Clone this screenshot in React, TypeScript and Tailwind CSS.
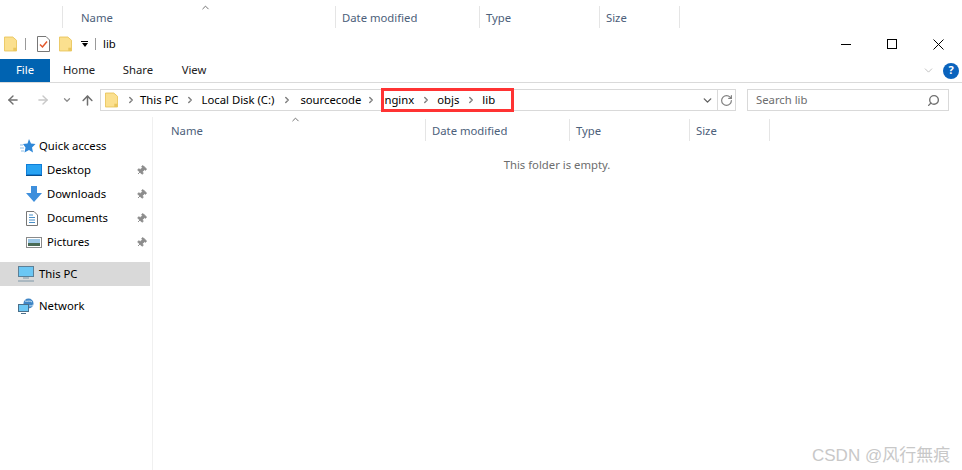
import React from 'react';
import { ArrowLeft, ArrowRight, ArrowUp, ChevronDown, ChevronRight, ChevronUp, Pin, RotateCw, Search } from 'lucide-react';

const FONT = "font-['Noto_Sans','Open_Sans',sans-serif]";

const FolderIcon: React.FC<{ className?: string }> = ({ className }) => (
  <svg viewBox="0 0 14 16" className={className}>
    <path d="M0.5 0.5H9.5L13.5 4V15.5H0.5Z" fill="#fbe08f" stroke="#e9c65e" />
    <path d="M10 12H13.5V15.5H10Z" fill="#e9c65e" />
  </svg>
);

const ChecklistIcon = () => (
  <svg viewBox="0 0 13 16" className="h-4 w-[13px]">
    <path d="M0.5 0.5H9L12.5 4V15.5H0.5Z" fill="#fff" stroke="#777" />
    <path d="M3 8.5L5.5 11L10 5.5" fill="none" stroke="#e2572b" strokeWidth="1.5" />
  </svg>
);

const DesktopIcon = () => (
  <svg viewBox="0 0 16 12" className="h-3 w-4">
    <rect width="16" height="12" fill="#0f7ed8" />
    <path d="M1 1H15V10H1Z" fill="#29a3f2" />
    <path d="M0 11H16V12H0Z" fill="#0b4f8c" />
  </svg>
);

const DownloadIcon = () => (
  <svg viewBox="0 0 16 16" className="h-4 w-4">
    <path d="M5 0H11V7H16L8 16L0 7H5Z" fill="#3e8fdc" />
  </svg>
);

const DocumentIcon = () => (
  <svg viewBox="0 0 12 15" className="h-[15px] w-3">
    <path d="M0.5 0.5H8L11.5 4V14.5H0.5Z" fill="#fff" stroke="#777" />
    <path d="M3 4H7M3 6.5H9M3 9H9M3 11.5H9" stroke="#4a90c8" />
  </svg>
);

const PicturesIcon = () => (
  <svg viewBox="0 0 16 11" className="h-[11px] w-4">
    <rect x="0.5" y="0.5" width="15" height="10" fill="#fff" stroke="#8a8a8a" />
    <rect x="2" y="2" width="12" height="4" fill="#9cc7e6" />
    <rect x="2" y="6" width="12" height="3" fill="#4a6b55" />
  </svg>
);

const PcIcon = () => (
  <svg viewBox="0 0 16 16" className="h-4 w-4">
    <rect x="0.5" y="0.5" width="15" height="10" fill="#6cc7f4" stroke="#5c7f96" />
    <path d="M5 12H11M0 15H16" stroke="#7d97a8" />
  </svg>
);

const NetworkIcon = () => (
  <svg viewBox="0 0 16 16" className="h-4 w-4">
    <circle cx="10.5" cy="5.5" r="5" fill="#3f86c6" />
    <path d="M7 3C9 4 12 2 14 4M8 8C10 7 13 9 15 7" stroke="#cfe6f5" fill="none" />
    <rect x="0.5" y="6.5" width="10" height="7" fill="#6cc7f4" stroke="#4a6f8a" />
    <path d="M3 15.5H8" stroke="#4a6f8a" />
  </svg>
);

const QuickAccessIcon = () => (
  <svg viewBox="0 0 16 14" className="h-[14px] w-4">
    <path d="M9 0L11 4.5L15.5 5L12 8.500L13 13.500L9 11L4.500 13.500L5.500 8.500L3 5L7.500 4.500Z" fill="#2f88d8" />
    <path d="M0 6H3M0 9H4M1 12H4" stroke="#8dbde6" />
  </svg>
);

const CloseIcon = () => (
  <svg viewBox="0 0 11 11" className="h-[11px] w-[11px]">
    <path d="M0.5 0.5L10.5 10.5M10.5 0.5L0.5 10.5" stroke="#000" strokeWidth="1" />
  </svg>
);

const ColumnHeaders: React.FC<{ className: string; widths: string[] }> = ({ className, widths }) => {
  const labels = ['Name', 'Date modified', 'Type', 'Size'];
  return (
    <div className={`flex text-[#4c607a] ${className}`}>
      {labels.map((label, i) => (
        <div key={label} className={`flex h-[22px] items-center border-r border-[#e5e5e5] pl-1.5 pt-[3px] ${widths[i]}`}>
          {label}
        </div>
      ))}
    </div>
  );
};

const Crumb: React.FC<{ label: string; gap?: string }> = ({ label, gap = 'w-[23px]' }) => (
  <>
    <span>{label}</span>
    <span className={`flex justify-center ${gap}`}>
      <ChevronRight size={10} strokeWidth={3.5} className="text-[#808080]" />
    </span>
  </>
);

const NavItem: React.FC<{ icon: React.ReactNode; label: string; pinned?: boolean }> = ({ icon, label, pinned }) => (
  <div className="flex h-6 items-center pl-[26px] pr-[2px]">
    <span className="flex w-[21px] justify-start">{icon}</span>
    <span className="grow">{label}</span>
    {pinned && <Pin size={11} className="mr-[1px] rotate-45 fill-[#8c8c8c] text-[#8c8c8c]" />}
  </div>
);

export default function App() {
  return (
    <div className={`flex h-[470px] w-[962px] flex-col overflow-hidden bg-white text-[11.3px] text-black ${FONT}`}>
      {/* leftover header strip from the window behind */}
      <div className="relative h-[33px] pt-[6px]">
        <ColumnHeaders className="ml-[62px] border-l border-[#e5e5e5]" widths={['w-[273px] pl-[18px]', 'w-[144px]', 'w-[120px]', 'w-[80px]']} />
        <ChevronUp size={11} className="absolute left-[200px] top-[2px] text-[#666]" />
      </div>

      {/* title bar */}
      <div className="flex h-[26px] items-center pb-[4px] pl-1">
        <FolderIcon className="h-4 w-[13px]" />
        <span className="ml-[8px] h-3 w-px bg-[#999]" />
        <span className="ml-[11px] flex"><ChecklistIcon /></span>
        <FolderIcon className="ml-[9px] h-4 w-[13px]" />
        <span className="ml-[8px] flex w-[9px] flex-col items-center">
          <span className="mb-px h-px w-[7px] bg-black" />
          <span className="h-0 w-0 border-x-[3.5px] border-t-[4px] border-x-transparent border-t-black" />
        </span>
        <span className="ml-[6px] h-3 w-px bg-[#999]" />
        <span className="ml-[7px] grow">lib</span>
        <div className="flex items-center">
          <span className="flex w-[46px] justify-center"><span className="h-px w-[10px] bg-black" /></span>
          <span className="flex w-[46px] justify-center"><span className="h-[10px] w-[10px] border border-black" /></span>
          <span className="mr-[1px] flex w-[46px] justify-center"><CloseIcon /></span>
        </div>
      </div>

      {/* ribbon tabs */}
      <div className="flex h-6 items-stretch border-b border-[#dadada]">
        <div className="flex w-[50px] items-center justify-center bg-[#0063b1] text-white">File</div>
        <div className="flex w-[58px] items-center justify-center text-[#222]">Home</div>
        <div className="flex w-[60px] items-center justify-center text-[#222]">Share</div>
        <div className="flex w-[52px] items-center justify-center text-[#222]">View</div>
        <div className="grow" />
        <div className="flex items-center pr-[3px]">
          <ChevronDown size={13} strokeWidth={1.2} className="mr-[8px] text-[#a0a0a0]" />
          <span className="flex h-4 w-4 items-center justify-center rounded-full bg-[#0a63bd] text-[11px] font-bold text-white">?</span>
        </div>
      </div>

      {/* address bar */}
      <div className="flex h-[34px] items-center">
        <div className="flex w-[100px] items-center pl-[6px]">
          <ArrowLeft size={14} strokeWidth={2.4} className="text-[#707070]" />
          <ArrowRight size={14} strokeWidth={2.4} className="ml-[16px] text-[#c8c8c8]" />
          <ChevronDown size={10} strokeWidth={3} className="ml-[12px] text-[#8c8c8c]" />
          <ArrowUp size={15} strokeWidth={2.4} className="ml-[8px] text-[#707070]" />
        </div>
        <div className="flex h-[22px] w-[636px] items-center border border-[#d9d9d9]">
          <FolderIcon className="ml-[4px] h-4 w-[13px]" />
          <span className="flex w-[22px] justify-center pl-1"><ChevronRight size={10} strokeWidth={3.5} className="text-[#808080]" /></span>
          <Crumb label="This PC" />
          <Crumb label="Local Disk (C:)" gap="w-[26px]" />
          <Crumb label="sourcecode" gap="w-[20px]" />
          <div className="z-10 -my-[2px] flex h-[24px] w-[133px] items-center border-[3px] border-[#ff3333]">
            <Crumb label="nginx" />
            <Crumb label="objs" />
            <span>lib</span>
          </div>
          <span className="grow" />
          <ChevronDown size={13} strokeWidth={2.5} className="mr-[3px] text-[#606060]" />
          <span className="flex h-full w-[18px] items-center justify-center border-l border-[#d9d9d9]">
            <RotateCw size={13} strokeWidth={2.2} className="text-[#808080]" />
          </span>
        </div>
        <div className="ml-[11px] flex h-[22px] w-[202px] items-center justify-between border border-[#d9d9d9] pl-2 pr-2 text-[#6d6d6d]">
          <span>Search lib</span>
          <Search size={13} strokeWidth={2.5} className="-scale-x-100 text-[#707070]" />
        </div>
      </div>

      {/* main */}
      <div className="flex grow">
        <aside className="w-[153px] border-r border-[#f0f0f0] pr-[2px] pt-[17px]">
          <div className="flex h-6 items-center pl-[20px]">
            <span className="flex w-[19px]"><QuickAccessIcon /></span>
            <span>Quick access</span>
          </div>
          <NavItem icon={<DesktopIcon />} label="Desktop" pinned />
          <NavItem icon={<DownloadIcon />} label="Downloads" pinned />
          <NavItem icon={<DocumentIcon />} label="Documents" pinned />
          <NavItem icon={<PicturesIcon />} label="Pictures" pinned />
          <div className="mt-[8px] flex h-6 items-center bg-[#d9d9d9] pl-[18px]">
            <span className="flex w-[21px]"><PcIcon /></span>
            <span>This PC</span>
          </div>
          <div className="mt-[8px] flex h-6 items-center pl-[18px]">
            <span className="flex w-[21px]"><NetworkIcon /></span>
            <span>Network</span>
          </div>
        </aside>
        <section className="relative grow pt-[2px]">
          <ChevronUp size={11} className="absolute left-[137px] top-[-3px] text-[#666]" />
          <ColumnHeaders className="" widths={['w-[273px] pl-[18px]', 'w-[144px]', 'w-[120px]', 'w-[80px]']} />
          <p className="mt-[16px] pr-[1px] text-center text-[#6d6d6d]">This folder is empty.</p>
        </section>
      </div>

      <span className="absolute left-[812px] top-[443px] font-['Liberation_Sans','Noto_Sans_CJK_SC',sans-serif] text-[17px] text-[#c8c8c8]">CSDN @风行無痕</span>
    </div>
  );
}
